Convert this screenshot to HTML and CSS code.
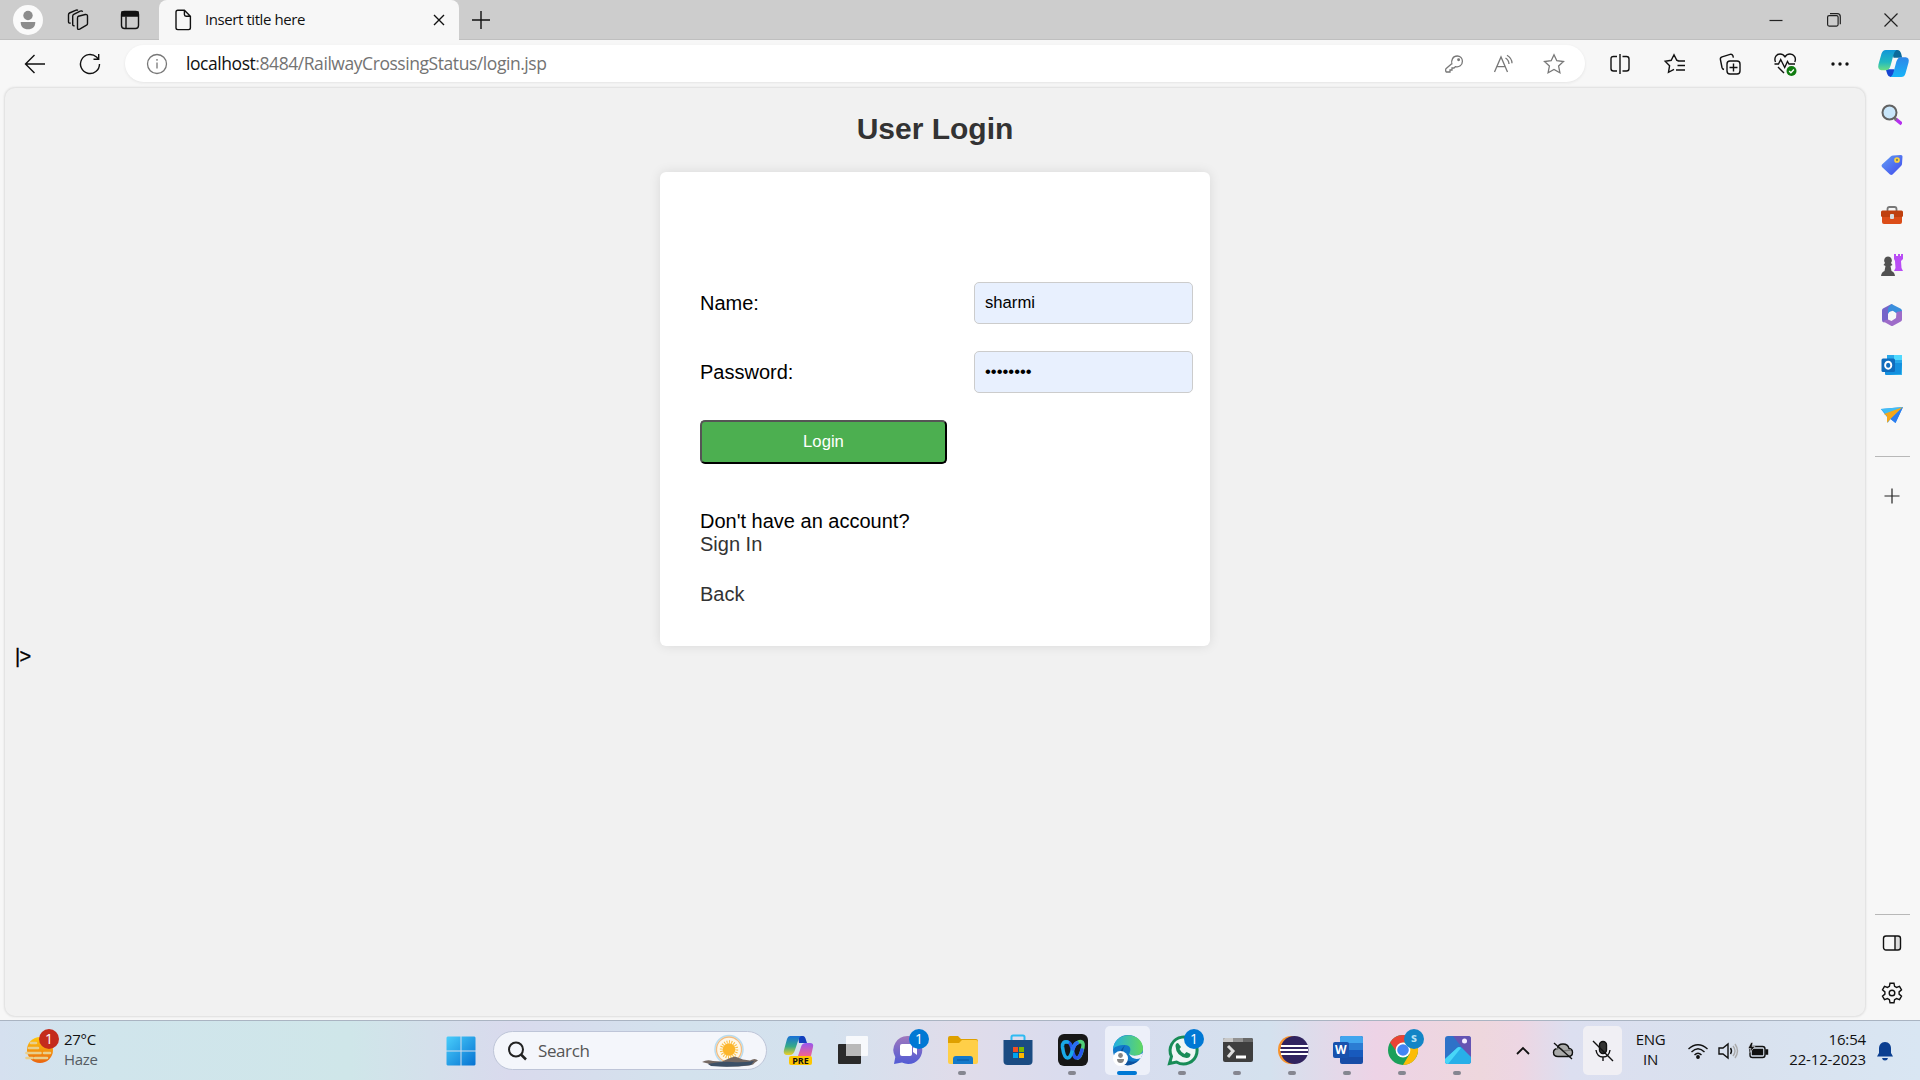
FILE: index.html
```html
<!DOCTYPE html>
<html lang="en">
<head>
<meta charset="utf-8">
<title>Insert title here</title>
<link rel="stylesheet" href="styles.css">
</head>
<body>
<div class="screen">
  <header class="tabbar">
    <div class="cell avatar"><svg width="30" height="30" viewBox="0 0 30 30"><circle cx="15" cy="15" r="15" fill="#fafafa"/><circle cx="15" cy="10.5" r="4.7" fill="#8c8c8c"/><path d="M7.700 17h14.600c0 5-2.800 7.300-7.300 7.300S7.700 22 7.700 17z" fill="#8c8c8c"/></svg></div>
    <div class="cell stack"><svg class="line" width="22" height="22" viewBox="0 0 22 22"><path d="M11.400 7.200l6.800-1.700q2.300-.4 2.300 1.600v7.300q0 1.300-1 1.800l-6.800 3.900q-2.200 1-2.200-1.200V9.300q0-1.600.9-2.100zM7.600 16.700l-.8.1q-1.100-.1-1.100-1.400V7.200q0-1.400 1-1.900l6.500-3.200q1.900-.7 2.300.8M3.700 14q-2.200.6-2.200-1.300V5.800q0-1.300 1-1.800l6-2.700q1.700-.8 2.400.2"/></svg></div>
    <div class="cell workspaces"><svg class="line" width="20" height="20" viewBox="0 0 20 20"><rect x="1.500" y="1.500" width="17" height="17" rx="3"/><path d="M2 2h16v4H2z" fill="#111"/><path d="M6 6.500v12"/></svg></div>
    <div class="tab">
      <svg class="line" width="18" height="22" viewBox="0 0 18 22"><path d="M2 3q0-1.800 1.800-1.800h6.600l6 6v11.600q0 1.800-1.800 1.800H3.800q-1.800 0-1.800-1.800zM10.400 1.500v4q0 1.700 1.700 1.700h4"/></svg>
      <span class="tab-title">Insert title here</span>
      <svg class="line" width="12" height="12" viewBox="0 0 12 12"><path d="M1 1l10 10M11 1L1 11"/></svg>
    </div>
    <div class="cell newtab"><svg class="line" width="18" height="18" viewBox="0 0 18 18"><path d="M9 0v18M0 9h18"/></svg></div>
    <div class="window-buttons">
      <div class="cell"><svg class="thin" width="14" height="14" viewBox="0 0 14 14"><path d="M.5 7.500h13"/></svg></div>
      <div class="cell"><svg class="thin" width="14" height="14" viewBox="0 0 14 14"><rect x=".6" y="2.600" width="10.500" height="10.500" rx="1.500"/><path d="M3 .7h7.300q3 0 3 3v7.500"/></svg></div>
      <div class="cell"><svg class="thin" width="14" height="14" viewBox="0 0 14 14"><path d="M.5.5l13 13M13.500.5l-13 13"/></svg></div>
    </div>
  </header>

  <nav class="toolbar">
    <div class="cell back"><svg class="line" width="22" height="20" viewBox="0 0 22 20"><path d="M10.500 1L1.500 10l9 9M1.500 10H21"/></svg></div>
    <div class="cell reload"><svg class="line" width="22" height="22" viewBox="0 0 22 22"><path d="M20.500 11a9.500 9.500 0 1 1-3-6.900l1.700 1.600M19.700 1v5.200h-5.200"/></svg></div>
    <div class="address">
      <svg class="grey info" width="22" height="22" viewBox="0 0 22 22"><circle cx="11" cy="11" r="9.500"/><path d="M11 9.500v6M11 6v1.700"/></svg>
      <span class="url"><b>localhost</b>:8484/RailwayCrossingStatus/login.jsp</span>
      <div class="cell"><svg class="grey" width="20" height="20" viewBox="0 0 20 20"><path d="M8 10.500C6.700 6 9 2 13.200 2c3 0 5.200 2.300 5.200 5.200 0 4.200-3.400 6.300-7 5.400L10 14H8v2H6v2H3q-1.300 0-1.300-1.300V15.500q0-.6.5-1.100L8 9.500"/><circle cx="14.600" cy="5.800" r=".8" fill="#777"/></svg></div>
      <div class="cell"><svg class="grey" width="20" height="20" viewBox="0 0 20 20"><path d="M.5 18L7 3 13.500 18M3 12.700h8M11.500 4q3.300 2 3.500 6M13 1.300q5 3 5 8"/></svg></div>
      <div class="cell"><svg class="grey" width="22" height="22" viewBox="0 0 22 22"><path d="M11 1.700l2.800 6 6.700.8-4.900 4.600 1.300 6.600L11 16.500l-5.900 3.200 1.300-6.600L1.500 8.500l6.700-.8z"/></svg></div>
    </div>
    <div class="actions">
      <div class="cell"><svg class="line" width="22" height="22" viewBox="0 0 22 22"><path d="M8 3.500H4.500q-2.500 0-2.500 2.500v9.500q0 2.500 2.500 2.500H8M11 1v20M13.500 3.500h4q2.500 0 2.500 2.500v9.500q0 2.500-2.500 2.500h-4"/></svg></div>
      <div class="cell"><svg class="line" width="22" height="22" viewBox="0 0 22 22"><path d="M14.500 7.600l-1.700-.3L10 1.700 7.200 7.300l-6 .9 4.400 4.500-1.100 6.600 5.500-3M13.500 8H21M13.500 12.500H21M12 17h9"/></svg></div>
      <div class="cell"><svg class="line" width="22" height="22" viewBox="0 0 22 22"><rect x="8" y="8" width="13" height="13" rx="3"/><path d="M14.500 10.500v8M10.500 14.500h8M5 16.500q-1.600-.4-2-2L1.400 6.500q-.4-2 1.700-2.700l8-2.400q2-.5 2.700 1.200l.6 2"/></svg></div>
      <div class="cell"><svg class="line" width="24" height="24" viewBox="0 0 24 24"><path d="M2.500 10C.5 5 4 2 7 2c2.400 0 4 1.300 5 2.800C13 3.300 14.600 2 17 2c3.800 0 6.600 3.500 4.800 8M1.500 12h4l2.200-4.500 4 8 2.800-6 1.500 2.500h6M5 15l6 6"/><circle cx="18.500" cy="19" r="5" fill="#107c10" stroke="none"/><path d="M16.200 19l1.700 1.700 3-3.200" stroke="#fff"/></svg></div>
      <div class="cell"><svg width="20" height="6" viewBox="0 0 20 6"><g fill="#111"><circle cx="3" cy="3" r="1.700"/><circle cx="10" cy="3" r="1.700"/><circle cx="17" cy="3" r="1.700"/></g></svg></div>
    </div>
    <div class="cell copilot"><svg width="31" height="27" viewBox="0 0 32 28"><defs><linearGradient id="cpa" x1="0" y1="0" x2="0" y2="1"><stop offset="0" stop-color="#1196d8"/><stop offset=".6" stop-color="#22b9c0"/><stop offset="1" stop-color="#6bde84"/></linearGradient><linearGradient id="cpb" x1="0" y1="0" x2="0" y2="1"><stop offset="0" stop-color="#2e86e8"/><stop offset="1" stop-color="#18b4f8"/></linearGradient></defs><path d="M14 0h6q3 0 4 4l1 4h-9z" fill="#0c6a9b"/><path d="M8 20h9l-1 8h-3q-2.500 0-3.500-3z" fill="#1646d2"/><path d="M8 0h11q-2 1-3 5l-3 11q-1.400 5-5 5H3.500Q-.8 20.500.4 15L3.500 4Q4.700 0 8 0z" fill="url(#cpa)"/><path d="M24 28H13q2-1 3-5l3-11q1.400-4.500 5-4.500h4.500q4.300.5 3.100 5.500l-3.100 11Q27.300 28 24 28z" fill="url(#cpb)"/></svg></div>
  </nav>

  <div class="body-row">
    <main class="page">
      <h2>User Login</h2>
      <form class="card">
        <div class="field"><label>Name:</label><span class="input">sharmi</span></div>
        <div class="field"><label>Password:</label><span class="input">••••••••</span></div>
        <button type="button" class="login">Login</button>
        <p class="account">Don't have an account?<br><a>Sign In</a></p>
        <p class="back-link"><a>Back</a></p>
      </form>
      <div class="stray">|&gt;</div>
    </main>

    <aside class="sidebar">
      <div class="cell"><svg width="22" height="22" viewBox="0 0 22 22"><path d="M13 16l2.500-2.500L21 18q.7 2-1.500 3.300z" fill="#b530ee"/><path d="M12.500 13l3 3" stroke="#777" stroke-width="2.500"/><circle cx="8.500" cy="8.500" r="7" fill="#c9e6fa" stroke="#626262" stroke-width="2"/></svg></div>
      <div class="cell"><svg width="22" height="22" viewBox="0 0 22 22"><defs><linearGradient id="tg" x1="0" y1="0" x2="1" y2="1"><stop stop-color="#62a0f5"/><stop offset="1" stop-color="#4148ec"/></linearGradient></defs><path d="M12 1.500L20 1q1.500 0 1.500 1.500L21 10q0 1-1 2l-8.500 8.600q-1.200.9-2.500 0L1 13q-1-1.200 0-2.500L10 2.300q.8-.8 2-.8z" fill="url(#tg)"/><circle cx="16" cy="6" r="2" fill="#7f8c62" stroke="#ffd43d" stroke-width="1.700"/></svg></div>
      <div class="cell"><svg width="24" height="20" viewBox="0 0 24 20"><path d="M7.500 6V4q0-2 2-2h5q2 0 2 2v2" fill="none" stroke="#777" stroke-width="1.800"/><path d="M2 9h20v8q0 2-2 2H4q-2 0-2-2z" fill="#dc4d18"/><rect x="1" y="5.500" width="22" height="6.500" rx="1.500" fill="#bf400f"/><rect x="10" y="9" width="4" height="5" rx="1" fill="#d7dde0"/></svg></div>
      <div class="cell"><svg width="24" height="24" viewBox="0 0 24 24"><path d="M14 1h2v2h2V1h2v2h1V1h2v5l-2 2 .5 7 1.500 3h-9l1.500-3L15 8l-1-2z" fill="#b94df5"/><path d="M8 3.500a4 4 0 0 1 3 6.500l1.500 2-2 1 1 5q3 1 3.500 5H1q.5-4 3.500-5l1-5-2-1L5 10a4 4 0 0 1 3-6.500z" fill="#515151"/></svg></div>
      <div class="cell"><svg width="22" height="24" viewBox="0 0 22 24"><path d="M10 1.200L2 5.500q-1 .7-1 2V17q0 2 2 2.500l4-2.300V11l4.500-3.200V1.500z" fill="#7465c9"/><path d="M10.500 1l9.300 4.700q1.200.8 1.200 2V13l-6-3-4-2.500-4 3.500V5z" fill="#3a8fdd"/><path d="M21 8v8.500q0 1.300-1.200 2L12 22.700q-1 .5-2 0l-8.500-4.600 5.500-1.500 3.500 1.500 4.500-3 .5-6z" fill="#9e6cc9"/><circle cx="11" cy="12.200" r="3.900" fill="#f7f7f7"/></svg></div>
      <div class="cell"><svg width="22" height="22" viewBox="0 0 22 22"><path d="M6 1h15v9H6z" fill="#28a8ea"/><path d="M13 1h8v5h-8z" fill="#50d9ff"/><path d="M4 9h17v11q0 1-1 1H5q-1 0-1-1z" fill="#1490df"/><path d="M21 10v10L8 21h12z" fill="#35bdf1"/><rect x=".5" y="4.500" width="13.500" height="13.500" rx="1.500" fill="#0f6cbd"/><ellipse cx="7.200" cy="11.200" rx="3.100" ry="3.500" fill="none" stroke="#fff" stroke-width="1.900"/></svg></div>
      <div class="cell"><svg width="24" height="20" viewBox="0 0 24 20"><path d="M.8 4L23 2l-7.500 16-5-4-3 4-.5-6z" fill="#2e9df0"/><path d="M1 4L23 2 7 10z" fill="#42bdf5"/><path d="M23 2L10.500 14 7 17.800V11L4 9z" fill="#f5a71b"/><path d="M23 2l-7.500 16-5-4z" fill="#2c7cf0"/></svg></div>
      <hr>
      <div class="cell add"><svg class="thin" width="16" height="16" viewBox="0 0 16 16"><path d="M8 .5v15M.5 8h15"/></svg></div>
      <hr class="lower">
      <div class="cell"><svg class="line" width="20" height="18" viewBox="0 0 20 18"><rect x="13" y="2" width="5" height="14" fill="#ddd" stroke="none"/><rect x="1.500" y="2" width="17" height="14" rx="2.500"/><path d="M13 2v14"/></svg></div>
      <div class="cell"><svg class="line" width="22" height="22" viewBox="0 0 22 22"><path d="M9 1.300h4l.6 3 1.900 1.100 3-1 2 3.500-2.400 2v2.200l2.400 2-2 3.500-3-1-1.900 1.100-.6 3H9l-.6-3-1.900-1.100-3 1-2-3.500 2.400-2V9.900L1.500 7.900l2-3.500 3 1 1.900-1.100z"/><circle cx="11" cy="11" r="2.800"/></svg></div>
    </aside>
  </div>

  <footer class="taskbar">
    <div class="weather">
      <div class="badged"><svg width="30" height="30" viewBox="0 0 30 30"><defs><linearGradient id="sun" x1="0" y1="0" x2="0" y2="1"><stop stop-color="#ffc90d"/><stop offset="1" stop-color="#ea6410"/></linearGradient></defs><circle cx="15" cy="14" r="13" fill="url(#sun)"/><path d="M6 7h5M4 12h9M1.500 17h14M19 17h6M1.500 22h6M10 22h12" stroke="#e8cf8d" stroke-width="2.600" stroke-linecap="round"/></svg><span class="badge red">1</span></div>
      <div class="two-line">27°C<br><span>Haze</span></div>
    </div>
    <div class="cell start"><svg width="30" height="30" viewBox="0 0 30 30"><defs><linearGradient id="win" x1="0" y1="0" x2="1" y2="1"><stop stop-color="#49cefb"/><stop offset="1" stop-color="#0672d2"/></linearGradient></defs><path d="M1.500.5h13v14H.5v-13zM15.500.5h13l1 1v13h-14zM.5 15.500h14v14h-13l-1-1zM15.500 15.500h14v13l-1 1h-13z" fill="url(#win)"/></svg></div>
    <div class="search">
      <svg width="20" height="20" viewBox="0 0 20 20"><circle cx="9" cy="8.500" r="7" fill="none" stroke="#222" stroke-width="2"/><path d="M14 13.500l5 5" stroke="#222" stroke-width="2.500"/></svg>
      <span>Search</span>
      <svg width="56" height="34" viewBox="0 0 56 34"><circle cx="27" cy="15.500" r="14" fill="#fff7e7" stroke="#b9dcef" stroke-width="1.500"/><circle cx="27" cy="15.500" r="12.500" fill="none" stroke="#f2bd83" stroke-width="1.300"/><circle cx="27" cy="15.500" r="7.700" fill="none" stroke="#f9bd3f" stroke-width="3" stroke-dasharray="1 1.400"/><circle cx="27" cy="15.500" r="6.300" fill="#fcb62c"/><path d="M0 28q5-3 11-1l9 .5 8-3.500 5-1.500 8 3 7 1q5-3 8 0l-3 2-2 2q-7 2-22 2-19 0-23-3z" fill="#756963"/><path d="M6 30q15-3 24-2 10 1 22-1l-3 4q-20 3-40 1z" fill="#3c5067"/></svg>
    </div>
    <div class="apps">
      <div class="app"><svg width="30" height="30" viewBox="0 0 30 30"><defs><linearGradient id="ca" x1="0" y1="0" x2="0" y2="1"><stop stop-color="#1870d8"/><stop offset=".55" stop-color="#35aa88"/><stop offset="1" stop-color="#f0cf25"/></linearGradient><linearGradient id="cb" x1="0" y1="0" x2="0" y2="1"><stop stop-color="#9757ef"/><stop offset="1" stop-color="#f3648e"/></linearGradient></defs><path d="M15 1h5q2 0 3 4l1 3h-8z" fill="#123fbd"/><path d="M7 1h11q-2 1-3 5l-3 9q-1.500 5-5 5H3q-3-1-2-5L4 4q1-3 3-3z" fill="url(#ca)"/><path d="M28 21H15l3-9q1-4 5-4h4q4 0 3 4z" fill="url(#cb)"/></svg><span class="pre">PRE</span></div>
      <div class="app"><svg width="32" height="30" viewBox="0 0 32 30"><rect x="1" y="9" width="23" height="20" rx="1" fill="#2a2a2a"/><rect x="9" y="1" width="22" height="20" rx="1" fill="#fff" opacity=".8"/><path d="M9 9h15v12H9z" fill="#b9b9b9"/></svg></div>
      <div class="app"><svg width="30" height="30" viewBox="0 0 30 30"><defs><linearGradient id="tm" x1="0" y1="0" x2="0" y2="1"><stop stop-color="#a078bd"/><stop offset="1" stop-color="#515bd5"/></linearGradient></defs><path d="M15 1a14 14 0 1 1-6 26.500L1 29l1.300-7A14 14 0 0 1 15 1z" fill="url(#tm)"/><rect x="7" y="9" width="12" height="12" rx="2" fill="#fff"/><path d="M20 13l4-3v10l-4-3z" fill="#fff"/></svg><span class="badge">1</span></div>
      <div class="app open"><svg width="30" height="30" viewBox="0 0 30 30"><path d="M0 3q0-2 2-2h8l3 3h15q2 0 2 2v6H0z" fill="#dea000"/><path d="M0 8h11l3-3h14q2 0 2 2v20q0 2-2 2H2q-2 0-2-2z" fill="#ffcf48"/><path d="M5 29v-5q0-3 3-3h14q3 0 3 3v5z" fill="#1479ca"/><path d="M9 25h12" stroke="#06569c"/></svg></div>
      <div class="app"><svg width="30" height="32" viewBox="0 0 30 32"><path d="M8.500 7V3q0-1.500 1.500-1.500h10q1.500 0 1.500 1.500v4" fill="none" stroke="#2ebaf2" stroke-width="2"/><path d="M.5 6h29v21q0 4-4 4h-21q-4 0-4-4z" fill="#1b4c82"/><path d="M10 13h5v5h-5z" fill="#f25022"/><path d="M16 13h5v5h-5z" fill="#7fba00"/><path d="M10 19h5v5h-5z" fill="#00a4ef"/><path d="M16 19h5v5h-5z" fill="#ffb900"/></svg></div>
      <div class="app open"><svg width="30" height="32" viewBox="0 0 30 32"><rect width="30" height="32" rx="6" fill="#171717"/><g fill="none" stroke-width="3.600" stroke-linecap="round"><path d="M19 9q3-2.500 5.500-.5 1.500 2-.5 8-1.500 6-4 7.500" stroke="#4fd07a"/><path d="M24 16q-2 8-5 8-3 0-4.500-7Q13 8 9.500 8" stroke="#2557ee"/><path d="M9.500 8Q4 7 4.500 13q1.500 11 5 11 3 0 5-8 1.500-6 4.500-7" stroke="#19a9e8"/><path d="M15 15q1.500-5 4-6" stroke="#2b6cf3"/></g></svg></div>
      <div class="app open active"><svg width="32" height="32" viewBox="0 0 32 32"><defs><linearGradient id="ed"><stop stop-color="#22aee3"/><stop offset="1" stop-color="#63d95e"/></linearGradient></defs><circle cx="16" cy="16" r="15" fill="#1279ca"/><path d="M1 16C2-4 31-3 31 15c0 6-9 9-14 5 3-5 1-9-4-9-6 0-12 2-12 5z" fill="url(#ed)"/><path d="M13 11q-6 11 4 16 5 2 10-1-10 9-18 3-6-7 4-18z" fill="#0c529f"/><path d="M17 20q6 4 14-1l-2 5q-8 3-12-4z" fill="#f0f1f8"/><circle cx="8.500" cy="24.500" r="7.500" fill="#fff"/><circle cx="8.500" cy="21.500" r="2.400" fill="#858585"/><path d="M5 25h7q0 4-3.500 4T5 25z" fill="#858585"/></svg></div>
      <div class="app open"><svg width="32" height="32" viewBox="0 0 32 32"><path d="M2.500 29.500l2-7A13.500 13.500 0 1 1 9.500 28z" fill="#eff6f5" stroke="#188c57" stroke-width="3"/><path d="M11 9l3 4-1.500 2q2 4 5 5l2-2 4 2q0 4-4 4Q9 22 8.500 12q0-3 2.500-3z" fill="#188c57"/></svg><span class="badge">1</span></div>
      <div class="app open"><svg width="30" height="24" viewBox="0 0 30 24"><rect width="30" height="24" rx="2" fill="#3e3e3e"/><path d="M0 4V2q0-2 2-2h8v4z" fill="#c8c8c8"/><path d="M10 0h10v4H10z" fill="#929292"/><path d="M20 0h8q2 0 2 2v2H20z" fill="#686868"/><path d="M5 8l5 5-5 6" fill="none" stroke="#ddd" stroke-width="3"/><path d="M13 19h10" stroke="#fff" stroke-width="3"/></svg></div>
      <div class="app open"><svg width="32" height="30" viewBox="0 0 32 30"><ellipse cx="14" cy="15" rx="13" ry="14" fill="#f7942e"/><circle cx="17.500" cy="15" r="14" fill="#30235f"/><path d="M4 11h27M3 15h28M4 19h27" stroke="#fff" stroke-width="1.800"/></svg></div>
      <div class="app open"><svg width="30" height="30" viewBox="0 0 30 30"><rect x="7" y="1" width="23" height="28" rx="2" fill="#174ca7"/><path d="M7 8V3q0-2 2-2h19q2 0 2 2v5z" fill="#41a5ee"/><path d="M7 8h23v7H7z" fill="#2b7cd3"/><path d="M7 15h23v7H7z" fill="#185abd"/><rect y="7" width="16" height="16" rx="2" fill="#1751ad"/></svg><span class="word">W</span></div>
      <div class="app open"><svg width="30" height="32" viewBox="0 0 30 32"><circle cx="15" cy="16" r="15" fill="#1ba05a"/><path d="M2 8.500A15 15 0 0 1 28 8.500H15L9 18z" fill="#ea4335"/><path d="M28 8.500A15 15 0 0 1 15 31l6.500-11L15 8.500z" fill="#fbbc09"/><circle cx="15" cy="16" r="7.400" fill="#fff"/><circle cx="15" cy="16" r="5.800" fill="#4285f4"/></svg><span class="badge chrome">s</span></div>
      <div class="app open"><svg width="28" height="30" viewBox="0 0 28 30"><rect x="1" y="1" width="26" height="28" rx="3" fill="#2e72c8"/><path d="M9 1h15q3 0 3 3v20z" fill="#6554b3"/><path d="M1 24l12-11q3-2 5 0l9 9v4q0 3-3 3H4q-3 0-3-3z" fill="#28afe8"/><path d="M1 24l12-11q2-2 4 0L4 29q-3 0-3-3z" fill="#48d6f8"/><circle cx="20.500" cy="6" r="2.500" fill="#f4edff"/></svg></div>
    </div>
    <div class="tray">
      <div class="cell chevron"><svg class="line bold" width="16" height="10" viewBox="0 0 16 10"><path d="M2 8l6-6 6 6"/></svg></div>
      <div class="cell cloud"><svg class="line" width="22" height="20" viewBox="0 0 22 20"><path d="M6 15.500q-4.500 0-4.500-4 0-3.500 4-4Q6 3 11 3t6 4.500q3.500.5 3.500 4 0 4-4.500 4z" fill="#aaa"/><path d="M4 8q5-2 7 2l8-1" stroke="#777"/><path d="M2 2l18 16"/></svg></div>
      <div class="cell mic"><svg class="line" width="22" height="22" viewBox="0 0 22 22"><rect x="7.500" y="1.500" width="7" height="12" rx="3.500" fill="#333"/><path d="M4 10q1 7 7 7t7-7M11 17v4M1 1l20 20"/></svg></div>
      <div class="two-line lang">ENG<br>IN</div>
      <div class="cell status"><svg class="line" width="20" height="16" viewBox="0 0 20 16"><path d="M.5 6q9.500-8.500 19 0M3.500 9q6.500-6.500 13 0M6.500 12q3.500-3.500 7 0"/><circle cx="10" cy="14" r="1.200" fill="#111"/></svg></div>
      <div class="cell status"><svg class="line" width="20" height="18" viewBox="0 0 20 18"><path d="M1 6h4l5-4v14l-5-4H1zM12.500 6q2 3 0 6"/><path d="M15 4q4 5 0 10M17 2q5 7 0 14" stroke="#aaa"/></svg></div>
      <div class="cell status"><svg class="line" width="22" height="18" viewBox="0 0 22 18"><rect x="3" y="4.500" width="15" height="11" rx="2.500"/><path d="M5.500 7.500h10v5h-10zM19 8h1.500v4H19z" fill="#111"/><path d="M4 .5L1 6.500h3l-1 4 5-6H5l1-4z" fill="#111" stroke="#e3e5ee" stroke-width=".6"/></svg></div>
      <div class="two-line clock">16:54<br>22-12-2023</div>
      <svg class="bell" width="18" height="20" viewBox="0 0 18 20"><path d="M9 1c-4 0-6 3-6 6.500V12l-2 3.500h16L15 12V7.500C15 4 13 1 9 1zM6 17h6q-.5 2.500-3 2.500T6 17z" fill="#0b3f91"/></svg>
    </div>
  </footer>
</div>
</body>
</html>
```
FILE: styles.css
```css
* { box-sizing: border-box; }
body { margin: 0; overflow: hidden; }
.screen {
  width: 1920px; height: 1080px;
  display: flex; flex-direction: column;
  background: #f7f7f7; color: #111;
  font-family: "Open Sans", "Noto Sans", sans-serif;
}
svg { display: block; flex: none; overflow: visible; }
.line { fill: none; stroke: #111; stroke-width: 1.4; }
.line.bold { stroke-width: 1.8; }
.thin { fill: none; stroke: #222; stroke-width: 1.2; }
.grey { fill: none; stroke: #777; stroke-width: 1.3; }
.cell { display: flex; align-items: center; justify-content: center; flex: none; }

.tabbar { height: 40px; display: flex; background: #cdcdcd; box-shadow: inset 0 -1px #bfbfbf; }
.tabbar .cell { height: 39px; }
.avatar { width: 56px; }
.stack { width: 43px; }
.workspaces { width: 60px; padding-left: 2px; }
.tab {
  width: 300px; height: 40px; padding: 0 14px 0 15px;
  display: flex; align-items: center;
  background: #f7f7f7; border-radius: 8px 8px 0 0;
}
.tab-title { flex: 1; margin-left: 13px; padding-bottom: 2px; font-size: 15px; line-height: 20px; letter-spacing: -0.42px; }
.newtab { width: 43px; }
.window-buttons { display: flex; margin-left: auto; }
.window-buttons .cell { width: 57.5px; }

.toolbar { height: 47px; display: flex; align-items: center; }
.back { width: 70px; }
.reload { width: 40px; }
.address {
  width: 1460px; height: 37px; margin: 0 7px 0 15px; padding: 0 6px 0 21px;
  display: flex; align-items: center;
  background: #fff; border-radius: 19px; box-shadow: 0 1px 3px #e4e4e4;
}
.address .cell { width: 50px; }
.url { flex: 1; margin-left: 18px; padding-bottom: 1px; font-size: 17.5px; letter-spacing: -0.44px; color: #737373; }
.url b { font-weight: 400; color: #111; }
.actions { display: flex; }
.actions .cell { width: 55px; }
.copilot { width: 52px; }

.body-row { height: 933px; display: flex; }
.page {
  width: 1860px; height: 928px; margin: 1px 0 0 5px; flex: none;
  background: #f1f1f1; border-radius: 10px; box-shadow: 0 0 2px 1px #dedede;
  font: 20px/23px "Liberation Sans", Arial, sans-serif; color: #000;
  display: flow-root;
}
.page h2 { margin: 24px 0 26px; font-size: 30px; line-height: 34px; text-align: center; color: #333; }
.card {
  width: 550px; height: 474px; margin: 0 auto; padding: 110px 17px 40px 40px;
  background: #fff; border-radius: 6px; box-shadow: 0 0 12px rgba(0, 0, 0, .1);
}
.field { display: flex; align-items: center; justify-content: space-between; height: 42px; margin-bottom: 27px; }
.input {
  width: 219px; height: 42px; padding: 0 10px;
  border: 1px solid #ccc; border-radius: 5px; background: #e8f0fe;
  font-size: 16.67px; line-height: 39px;
}
.login {
  display: block; width: 247px; height: 44px; padding: 0 0 1px;
  border: 2px solid; border-radius: 5px;
  border-color: #555 #000 #000 #555;
  background: #4caf50; color: #fff; font: 16.67px "Liberation Sans", Arial, sans-serif;
}
.account { margin: 46px 0 27px; }
.back-link { margin: 0; }
.card a { color: #333; }
.stray { margin: -1px 0 0 10px; letter-spacing: -0.7px; -webkit-text-stroke: 0.3px #000; }

.sidebar { width: 54px; padding-top: 3px; display: flex; flex-direction: column; }
.sidebar .cell { height: 50px; }
.sidebar hr { width: 35px; margin: 16px auto 0 10px; border: 0; border-top: 1px solid #b8b8b8; }
.sidebar .add { height: 77px; }
.sidebar .lower { margin: auto auto 3px 10px; }
.sidebar .cell:last-child { margin-bottom: 2px; }

.taskbar {
  height: 60px; display: flex; align-items: center;
  border-top: 1px solid #aab4c2;
  background: linear-gradient(90deg, #d5e0ef 0, #d0e5ec 110px, #cfe6e9 350px, #d9daed 510px, #d3e2ed 680px, #d4e1ee 830px, #e0dcea 960px, #d8dcef 1090px, #d4e1ee 1270px, #edd3e6 1375px, #eed7dd 1480px, #edd6e3 1520px, #dcdff0 1570px, #d9e1ee 1720px, #d9e6f3 1920px);
}
.weather { width: 433px; padding-left: 25px; display: flex; align-items: center; }
.badged { position: relative; }
.two-line { padding-bottom: 3px; font-size: 15px; line-height: 20px; }
.weather .two-line { margin-left: 9px; letter-spacing: -0.3px; }
.weather .two-line span { color: #555c63; }
.badge {
  position: absolute; width: 20px; height: 20px; border-radius: 50%;
  background: #0078d4; color: #fff; font-size: 14px; line-height: 20px; text-align: center;
}
.badge.red { background: #c42b1c; left: 14px; top: -7px; }
.start { width: 56px; }
.search {
  width: 274px; height: 39px; margin: 0 3px 0 4px; padding: 0 8px 0 13px;
  display: flex; align-items: center;
  background: #f4f6fb; border: 1px solid #bec5d8; border-radius: 20px;
}
.search span { flex: 1; margin-left: 11px; font-size: 17px; letter-spacing: -0.4px; color: #555; }
.apps { display: flex; height: 59px; align-items: center; }
.app {
  position: relative; width: 45px; height: 49px; margin: 0 5px; flex: none;
  display: flex; align-items: center; justify-content: center;
}
.app svg { margin-bottom: 1px; }
.app .badge { right: 1px; top: 3px; }
.app .badge.chrome { color: #b7e1f5; background: #1385c6; font-size: 12px; font-weight: 700; line-height: 18px; }
.app.open::after {
  content: ""; position: absolute; bottom: 0; left: 18px;
  width: 8px; height: 4px; border-radius: 2px; background: #858690;
}
.app.active { background: #edf0f9; border-radius: 5px; }
.app.active::after { left: 12px; width: 20px; background: #0078d4; }
.pre {
  position: absolute; left: 14px; top: 30px; width: 23px; height: 9px; border-radius: 2px;
  background: #fec700; font-size: 9px; line-height: 9px; font-weight: 700; text-align: center;
}
.word { position: absolute; left: 10px; top: 15px; color: #fff; font-size: 12px; line-height: 18px; font-weight: 700; }
.tray { display: flex; align-items: center; margin-left: 18px; }
.tray .cell { height: 49px; }
.chevron { width: 40px; }
.cloud { width: 40px; }
.mic { width: 39px; background: #f0eff4; border-radius: 5px; }
.lang { width: 57px; margin-right: 4px; text-align: center; letter-spacing: -0.3px; }
.status { width: 30px; }
.clock { width: 93px; text-align: right; letter-spacing: -0.15px; }
.bell { margin-left: 10px; }
```
